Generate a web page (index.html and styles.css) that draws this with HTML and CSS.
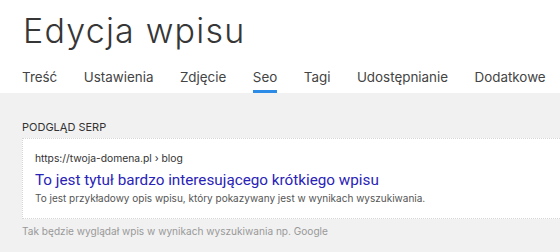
FILE: index.html
```html
<!DOCTYPE html>
<html lang="pl">
<head>
<meta charset="utf-8">
<title>Edycja wpisu</title>
<link rel="stylesheet" href="styles.css">
</head>
<body>
<header class="header">
  <h1 class="title">Edycja wpisu</h1>
  <nav class="tabs">
    <a class="tab">Treść</a>
    <a class="tab">Ustawienia</a>
    <a class="tab">Zdjęcie</a>
    <a class="tab active">Seo</a>
    <a class="tab">Tagi</a>
    <a class="tab">Udostępnianie</a>
    <a class="tab">Dodatkowe</a>
  </nav>
</header>
<main class="content">
  <h2 class="section-label">PODGLĄD SERP</h2>
  <div class="serp">
    <div class="serp-url">https://twoja-domena.pl › blog</div>
    <div class="serp-title">To jest tytuł bardzo interesującego krótkiego wpisu</div>
    <div class="serp-desc">To jest przykładowy opis wpisu, który pokazywany jest w wynikach wyszukiwania.</div>
  </div>
  <p class="hint">Tak będzie wyglądał wpis w wynikach wyszukiwania np. Google</p>
</main>
</body>
</html>
```
FILE: styles.css
```css
html, body {
  margin: 0;
  padding: 0;
}
body {
  width: 560px;
  height: 252px;
  overflow: hidden;
  background: #f1f1f1;
  font-family: Inter, "Noto Sans", sans-serif;
  color: #333;
}
.header {
  background: #fff;
  padding: 0 0 0 22px;
}
.title {
  margin: 0;
  padding: 11px 0 0 1px;
  font-family: Inter, sans-serif;
  font-weight: 300;
  font-size: 34px;
  line-height: 40px;
  letter-spacing: 1.2px;
  color: #363636;
}
.tabs {
  display: flex;
  gap: 26.5px;
  margin-top: 18px;
  white-space: nowrap;
}
.tab {
  font-size: 13.4px;
  line-height: 16px;
  color: #444;
  padding-bottom: 5px;
  border-bottom: 3px solid transparent;
}
.tab.active {
  border-bottom-color: #2d8be8;
}
.content {
  padding: 0 0 0 22px;
}
.section-label {
  margin: 0;
  padding-top: 27px;
  font-size: 11px;
  line-height: 14px;
  font-weight: 400;
  color: #333;
}
.serp {
  margin-top: 4px;
  background: #fff;
  border: 1px dotted #d6d6d6;
  border-right: none;
  padding: 12px 0 13px 12px;
}
.serp-url {
  font-size: 10.3px;
  line-height: 14px;
  color: #333;
}
.serp-title {
  font-family: Roboto, sans-serif;
  font-size: 15.25px;
  line-height: 20px;
  color: #2a23b8;
  margin-top: 5px;
}
.serp-desc {
  font-size: 10px;
  line-height: 14px;
  color: #555;
  margin-top: 1px;
}
.hint {
  margin: 5px 0 0;
  font-size: 10.1px;
  line-height: 14px;
  color: #999;
}
```
